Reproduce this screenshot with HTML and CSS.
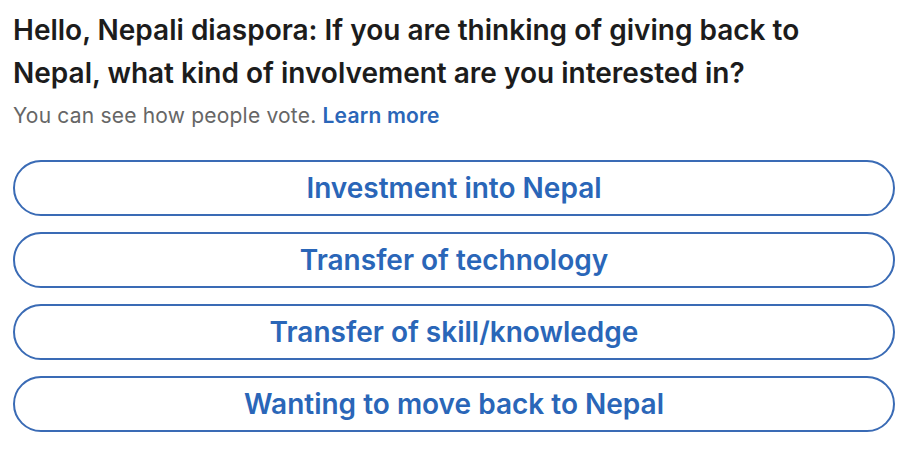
FILE: index.html
```html
<!DOCTYPE html>
<html>
<head>
<meta charset="utf-8">
<link rel="stylesheet" href="styles.css">
</head>
<body>
<div class="poll">
  <h1 class="question">Hello, Nepali diaspora: If you are thinking of giving back to Nepal, what kind of involvement are you interested in?</h1>
  <p class="note">You can see how people vote. <a class="learn" href="#">Learn more</a></p>
  <div class="options">
    <button class="option">Investment into Nepal</button>
    <button class="option">Transfer of technology</button>
    <button class="option">Transfer of skill/knowledge</button>
    <button class="option">Wanting to move back to Nepal</button>
  </div>
</div>
</body>
</html>
```
FILE: styles.css
```css
html, body {
  margin: 0;
  padding: 0;
  background: #ffffff;
}
.poll {
  padding: 9px 19px 0 13px;
  font-family: Inter, "Liberation Sans", sans-serif;
}
.question {
  margin: 0;
  font-size: 28px;
  line-height: 43px;
  font-weight: 600;
  color: #1c1c1c;
  max-width: 860px;
}
.note {
  margin: 9px 0 0 0;
  font-size: 21px;
  line-height: 24px;
  letter-spacing: 0.2px;
  color: #666666;
}
.learn {
  color: #2a66b8;
  font-weight: 600;
  text-decoration: none;
}
.options {
  margin-top: 32px;
  display: flex;
  flex-direction: column;
  gap: 16px;
}
.option {
  height: 56px;
  border: 2px solid #3a6bb5;
  border-radius: 28px;
  background: #ffffff;
  color: #2a66b8;
  font-family: Inter, "Liberation Sans", sans-serif;
  font-size: 28px;
  font-weight: 600;
  padding: 0;
  cursor: pointer;
}
```
